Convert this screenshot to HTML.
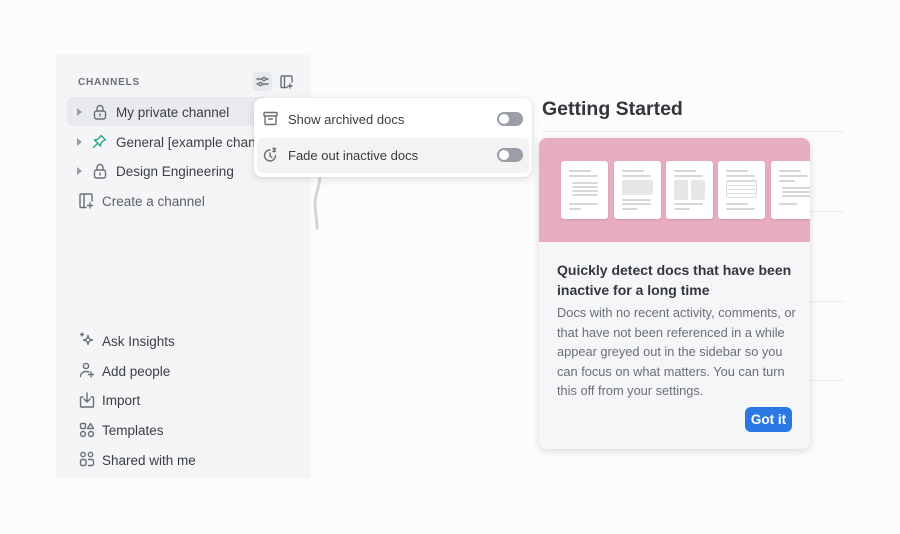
<!DOCTYPE html>
<html><head><style>
*{box-sizing:border-box;margin:0;padding:0}
body{width:900px;height:534px;background:#fcfcfc;font-family:"Liberation Sans",sans-serif;position:relative;overflow:hidden;color:#3a3d42}
.sb{position:absolute;left:56px;top:55px;width:255px;height:423px;background:#f4f5f7}
.abs{position:absolute}
.row{position:absolute;font-size:13.5px;color:#3a3d42;display:flex;align-items:center}
.ic{stroke:#6b6f76;fill:none;stroke-width:1.4;stroke-linecap:round;stroke-linejoin:round}
.tri{width:0;height:0;border-left:5px solid #9a9ea5;border-top:4px solid transparent;border-bottom:4px solid transparent;position:absolute}
.hl{position:absolute;height:1px;background:#ececee}
.tog{position:absolute;width:26px;height:14px;border-radius:7px;background:#9a9ea6}
.tog:after{content:"";position:absolute;left:2px;top:2px;width:10px;height:10px;border-radius:50%;background:#fff}
.doc{position:absolute;top:161px;width:47px;height:58px;background:#fff;border-radius:3px;box-shadow:0 1px 2px rgba(0,0,0,.12)}
.ln{position:absolute;height:2px;background:#d6d7db;border-radius:1px}
</style></head><body>
<div class="sb"></div>
<div class="abs" style="left:78px;top:77px;font-size:10px;letter-spacing:.8px;color:#6b6f76;font-weight:bold">CHANNELS</div>
<div class="abs" style="left:253px;top:72px;width:19px;height:19px;border-radius:4px;background:#e6e8eb"></div>
<svg class="abs" style="left:256px;top:75px" width="13" height="13" viewBox="0 0 13 13"><path class="ic" d="M1 4h11M1 9h11"/><circle cx="8" cy="4" r="1.6" fill="#e6e8eb" stroke="#6b6f76" stroke-width="1.3"/><circle cx="4.5" cy="9" r="1.6" fill="#e6e8eb" stroke="#6b6f76" stroke-width="1.3"/></svg>
<svg class="abs" style="left:280px;top:75px" width="13" height="14" viewBox="0 0 13 14"><path class="ic" d="M7 12.5H2a1 1 0 0 1-1-1V2a1 1 0 0 1 1-1h9a1 1 0 0 1 1 1v5M4.5 1v11.5M10 9v4M8 11h4"/></svg>
<div class="abs" style="left:67px;top:97px;width:200px;height:29px;border-radius:6px;background:#e8eaed"></div>
<div class="tri" style="left:77px;top:108px"></div>
<div class="tri" style="left:77px;top:138px"></div>
<div class="tri" style="left:77px;top:167px"></div>
<svg class="abs" style="left:93px;top:104px" width="14" height="16" viewBox="0 0 14 16"><rect class="ic" x="1.5" y="7" width="11" height="8" rx="2"/><path class="ic" d="M4 7V4.5a3 3 0 0 1 6 0V7M7 10v2"/></svg>
<svg class="abs" style="left:93px;top:163px" width="14" height="16" viewBox="0 0 14 16"><rect class="ic" x="1.5" y="7" width="11" height="8" rx="2"/><path class="ic" d="M4 7V4.5a3 3 0 0 1 6 0V7M7 10v2"/></svg>
<svg class="abs" style="left:92px;top:134px" width="15" height="15" viewBox="0 0 15 15"><path d="M9 1.5l4.5 4.5-2 .5-2.5 2.5-.5 3-6-6 3-.5L8 3zM5 10l-3.5 3.5" fill="none" stroke="#2ba38b" stroke-width="1.4" stroke-linejoin="round" stroke-linecap="round"/></svg>
<div class="row" style="left:116px;top:105px">My private channel</div>
<div class="row" style="left:116px;top:135px;width:138px;overflow:hidden;white-space:nowrap">General [example channel]</div>
<div class="row" style="left:116px;top:164px">Design Engineering</div>
<svg class="abs" style="left:79px;top:193px" width="15" height="16" viewBox="0 0 15 16"><path class="ic" d="M7 14.5H2a1 1 0 0 1-1-1V2a1 1 0 0 1 1-1h10a1 1 0 0 1 1 1v6M5 1v13.5M11 10v5M8.5 12.5h5"/></svg>
<div class="row" style="left:102px;top:194px;color:#5d6168">Create a channel</div>

<svg class="abs" style="left:79px;top:332px" width="16" height="16" viewBox="0 0 16 16"><path class="ic" d="M9 3.5c.5 3 1.5 4 4.5 4.5-3 .5-4 1.5-4.5 4.5-.5-3-1.5-4-4.5-4.5 3-.5 4-1.5 4.5-4.5zM3 1v3M1.5 2.5h3"/></svg>
<div class="row" style="left:102px;top:334px">Ask Insights</div>
<svg class="abs" style="left:79px;top:362px" width="16" height="16" viewBox="0 0 16 16"><circle class="ic" cx="7" cy="4" r="2.6"/><path class="ic" d="M1.5 14.5c0-3 2.5-5 5.5-5 1 0 2 .2 2.7.6M12 10v5M9.5 12.5h5"/></svg>
<div class="row" style="left:102px;top:364px">Add people</div>
<svg class="abs" style="left:79px;top:392px" width="16" height="16" viewBox="0 0 16 16"><path class="ic" d="M4 5H2.5a1 1 0 0 0-1 1v8a1 1 0 0 0 1 1h11a1 1 0 0 0 1-1V6a1 1 0 0 0-1-1H12M8 1v9M5 7l3 3 3-3"/></svg>
<div class="row" style="left:102px;top:393px">Import</div>
<svg class="abs" style="left:79px;top:422px" width="16" height="16" viewBox="0 0 16 16"><rect class="ic" x="1.5" y="1.5" width="5" height="5" rx="1.2"/><path class="ic" d="M11.5 1.5l3 5h-6z"/><circle class="ic" cx="4" cy="12" r="2.5"/><circle class="ic" cx="12" cy="12" r="2.5"/></svg>
<div class="row" style="left:102px;top:423px">Templates</div>
<svg class="abs" style="left:79px;top:451px" width="16" height="16" viewBox="0 0 16 16"><circle class="ic" cx="4" cy="3.5" r="2.2"/><circle class="ic" cx="11.5" cy="3.5" r="2.2"/><rect class="ic" x="1.5" y="8.5" width="5.5" height="6" rx="1.5"/><path class="ic" d="M9.5 8.5h3.5a1.5 1.5 0 0 1 1.5 1.5v3a1.5 1.5 0 0 1-1.5 1.5H9.5"/></svg>
<div class="row" style="left:102px;top:453px">Shared with me</div>

<svg class="abs" style="left:312px;top:172px" width="14" height="60" viewBox="0 0 14 60"><path d="M8 2c0 15-5 18-5 30 0 8 2 14 2 24" fill="none" stroke="#d3d5d9" stroke-width="3" stroke-linecap="round"/></svg>

<div class="abs" style="left:542px;top:98px;font-size:19.5px;font-weight:bold;color:#33363b">Getting Started</div>
<div class="hl" style="left:542px;top:131px;width:303px"></div>
<div class="hl" style="left:810px;top:211px;width:35px"></div>
<div class="hl" style="left:810px;top:301px;width:35px"></div>
<div class="hl" style="left:810px;top:380px;width:35px"></div>

<div class="abs" style="left:254px;top:98px;width:278px;height:79px;background:#fff;border-radius:8px;box-shadow:0 2px 8px rgba(0,0,0,.12),0 0 1px rgba(0,0,0,.15)"></div>
<div class="abs" style="left:257px;top:138px;width:272px;height:35px;border-radius:5px;background:#f3f3f4"></div>
<svg class="abs" style="left:263px;top:111px" width="15" height="15" viewBox="0 0 15 15"><rect class="ic" x="1" y="1.5" width="13" height="3.5" rx=".8"/><path class="ic" d="M2 5v7.5a1 1 0 0 0 1 1h9a1 1 0 0 0 1-1V5M5.5 8h4"/></svg>
<svg class="abs" style="left:263px;top:147px" width="16" height="16" viewBox="0 0 16 16"><path class="ic" d="M12.5 8.5A5.5 5.5 0 1 1 7 3M7 6v3l2 1.5M10 1.5h2.5L10 4.5h2.5"/></svg>
<div class="row" style="left:288px;top:112px;font-size:13px">Show archived docs</div>
<div class="row" style="left:288px;top:148px;font-size:13px">Fade out inactive docs</div>
<div class="tog" style="left:497px;top:112px"></div>
<div class="tog" style="left:497px;top:148px"></div>

<div class="abs" style="left:539px;top:138px;width:271px;height:311px;border-radius:8px;background:#f5f6f8;box-shadow:0 2px 8px rgba(0,0,0,.14);overflow:hidden">
 <div style="position:absolute;left:0;top:0;width:271px;height:104px;background:#e8aebf"></div>
</div>
<div class="abs" style="left:539px;top:138px;width:271px;height:104px;overflow:hidden">
 <div class="doc" style="left:22px;top:23px"><div class="ln" style="left:8px;top:9px;width:22px"></div><div class="ln" style="left:8px;top:14px;width:29px"></div><div class="ln" style="left:11px;top:21px;width:26px"></div><div class="ln" style="left:11px;top:25px;width:26px"></div><div class="ln" style="left:11px;top:29px;width:26px"></div><div class="ln" style="left:11px;top:33px;width:26px"></div><div class="ln" style="left:8px;top:42px;width:29px"></div><div class="ln" style="left:8px;top:47px;width:12px"></div></div>
 <div class="doc" style="left:75px;top:23px"><div class="ln" style="left:8px;top:9px;width:22px"></div><div class="ln" style="left:8px;top:14px;width:29px"></div><div style="position:absolute;left:8px;top:19px;width:31px;height:15px;background:#e6e6e9;border-radius:2px"></div><div class="ln" style="left:8px;top:38px;width:29px"></div><div class="ln" style="left:8px;top:42px;width:29px"></div><div class="ln" style="left:8px;top:47px;width:16px"></div></div>
 <div class="doc" style="left:127px;top:23px"><div class="ln" style="left:8px;top:9px;width:22px"></div><div class="ln" style="left:8px;top:14px;width:29px"></div><div style="position:absolute;left:8px;top:19px;width:14px;height:20px;background:#e6e6e9;border-radius:2px"></div><div style="position:absolute;left:25px;top:19px;width:14px;height:20px;background:#e6e6e9;border-radius:2px"></div><div class="ln" style="left:8px;top:42px;width:29px"></div><div class="ln" style="left:8px;top:47px;width:16px"></div></div>
 <div class="doc" style="left:179px;top:23px"><div class="ln" style="left:8px;top:9px;width:22px"></div><div class="ln" style="left:8px;top:14px;width:29px"></div><div style="position:absolute;left:8px;top:19px;width:31px;height:18px;border:1px solid #dcdde0;border-radius:2px;background:repeating-linear-gradient(0deg,#fff 0 3px,#dcdde0 3px 4px)"></div><div class="ln" style="left:8px;top:42px;width:22px"></div><div class="ln" style="left:8px;top:47px;width:29px"></div></div>
 <div class="doc" style="left:232px;top:23px"><div class="ln" style="left:8px;top:9px;width:22px"></div><div class="ln" style="left:8px;top:14px;width:29px"></div><div class="ln" style="left:8px;top:19px;width:16px"></div><div class="ln" style="left:11px;top:26px;width:30px"></div><div class="ln" style="left:11px;top:30px;width:30px"></div><div class="ln" style="left:11px;top:34px;width:30px"></div><div class="ln" style="left:8px;top:42px;width:18px"></div></div>
</div>
<div class="abs" style="left:557px;top:260px;font-size:14px;font-weight:bold;line-height:20px;color:#33363b;white-space:nowrap">Quickly detect docs that have been<br>inactive for a long time</div>
<div class="abs" style="left:557px;top:303px;font-size:12.8px;line-height:19.6px;color:#6b6f76;white-space:nowrap">Docs with no recent activity, comments, or<br>that have not been referenced in a while<br>appear greyed out in the sidebar so you<br>can focus on what matters. You can turn<br>this off from your settings.</div>
<div class="abs" style="left:745px;top:407px;width:47px;height:25px;border-radius:6px;background:#2b78e4;color:#fff;font-size:13.5px;font-weight:bold;text-align:center;line-height:25px">Got it</div>
</body></html>
